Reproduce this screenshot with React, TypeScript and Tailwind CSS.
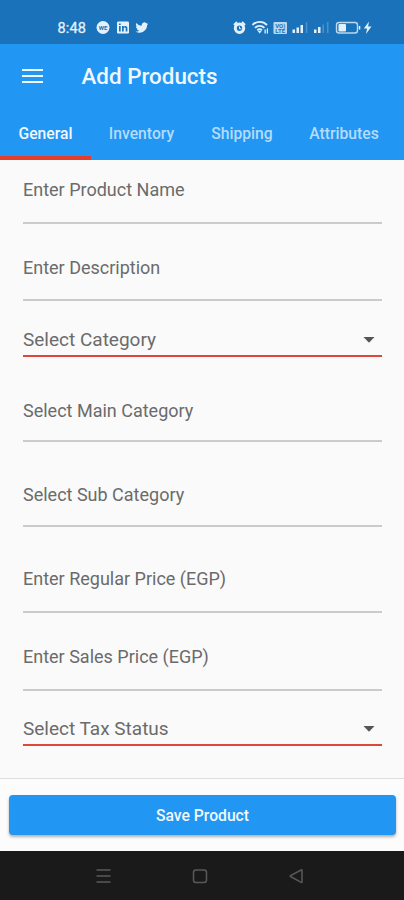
import { useState } from 'react'
import clsx from 'clsx'

const TABS = [
  { label: 'General', width: 'w-[91px]' },
  { label: 'Inventory', width: 'w-[101px]' },
  { label: 'Shipping', width: 'w-[100px]' },
  { label: 'Attributes', width: 'w-[104px]' },
]

const FIELDS = [
  { label: 'Enter Product Name', box: 'h-16 pb-[21px]' },
  { label: 'Enter Description', box: 'h-[77px] pb-5' },
  { label: 'Select Category', box: 'h-14 pb-1', select: true },
  { label: 'Select Main Category', box: 'h-[85px] pb-[18px]' },
  { label: 'Select Sub Category', box: 'h-[85px] pb-[19px]' },
  { label: 'Enter Regular Price (EGP)', box: 'h-[86px] pb-[21px]' },
  { label: 'Enter Sales Price (EGP)', box: 'h-[78px] pb-[21px]' },
  { label: 'Select Tax Status', box: 'h-[55px] pb-1', select: true },
]

function StatusBar() {
  return (
    <div className="h-11 shrink-0 bg-[#1a72ba] text-[#e3f1fd]">
      <svg width="404" height="44" viewBox="0 0 404 44" fill="currentColor" aria-hidden="true">
        <text x="57.5" y="32.500" fontSize="14.500" textLength="28.500" stroke="currentColor" strokeWidth=".3">8:48</text>
        {/* notifications */}
        <circle cx="103" cy="27.500" r="6.500" />
        <text x="103" y="29.800" fontSize="6" fontWeight="700" textAnchor="middle" fill="#1a72ba">WE</text>
        <rect x="117" y="21.500" width="12" height="12" rx="1.200" />
        <path d="M119 26h1.700v5.500H119zM119 23.500h1.700v1.500H119zM122 26h1.600v.8c1-1.400 3.800-1.200 3.800 1.500v3.200h-1.700v-2.800c0-1.600-2-1.500-2 0v2.800H122z" fill="#1a72ba" />
        <g transform="translate(135.5 21) scale(.54)">
          <path d="M23.600 4.900c-.9.4-1.800.6-2.800.8 1-.6 1.800-1.600 2.200-2.700-1 .6-2 1-3.100 1.200A4.900 4.900 0 0 0 11.500 8.600C7.400 8.400 3.800 6.400 1.400 3.500c-1.300 2.200-.7 5.100 1.500 6.600-.8 0-1.600-.2-2.200-.6 0 2.300 1.600 4.400 3.900 4.900-.7.2-1.500.2-2.200.1.600 2 2.400 3.400 4.600 3.400A9.900 9.900 0 0 1 0 19.500a14 14 0 0 0 7.500 2.200c9.100 0 14.300-7.700 14-14.600.8-.6 1.600-1.400 2.100-2.200z" />
        </g>
        {/* alarm */}
        <circle cx="239.500" cy="28.300" r="4.200" fill="none" stroke="currentColor" strokeWidth="3" />
        <path d="M234 25l3-3M245 25l-3-3" stroke="currentColor" strokeWidth="2" />
        <path d="M239.500 26.500v2.300h2" fill="none" stroke="currentColor" strokeWidth="1" />
        {/* wifi */}
        <g fill="none" stroke="currentColor" strokeWidth="1.900">
          <path d="M252.500 25c4-4.200 10.500-4.200 14.500 0M255 27.800c2.600-2.600 6.800-2.600 9.400 0M257.300 30.300c1.400-1.300 3.300-1.300 4.700 0" />
        </g>
        <path d="M257.700 31h4l-2 2.500zM264.500 29.500h1.300V33.500h-1.300zM266.800 28.500h1.200v5h-1.200z" />
        {/* volte */}
        <rect x="273.500" y="22" width="13.500" height="12" rx="1" opacity=".8" />
        <text x="280.200" y="27.800" fontSize="6" fontWeight="700" textAnchor="middle" fill="#1a72ba">VO)</text>
        <text x="280.200" y="33.300" fontSize="6" fontWeight="700" textAnchor="middle" fill="#1a72ba">LTE</text>
        {/* signal */}
        <path d="M292.500 29.500h2.500v3.500h-2.500zM296.500 27.500h2.500v5.500h-2.500zM300.500 25h2.500v8h-2.500zM314 29.500h2.500v3.500h-2.500zM318 27h2.500v6h-2.500z" />
        <path d="M305.800 22h1.500v11h-1.500zM322.500 24.500h1.500v8.500h-1.500zM327 22h1.500v11h-1.500z" opacity=".25" />
        {/* battery */}
        <rect x="336.500" y="22.500" width="21" height="10.500" rx="2.500" fill="none" stroke="currentColor" strokeWidth="1.400" opacity=".8" />
        <rect x="338.500" y="24" width="7.500" height="7.500" rx="1" />
        <path d="M358.800 26h1.500v3.500h-1.500zM369 21.500l-5.200 7h3.300L366 34l5.500-7.400h-3.400z" />
      </svg>
    </div>
  )
}

export default function App() {
  const [active, setActive] = useState('General')

  return (
    <div className="flex h-[900px] w-[404px] flex-col overflow-hidden bg-[#fafafa] font-[Roboto,sans-serif]">
      <StatusBar />

      <header className="flex h-[116px] shrink-0 flex-col bg-[#2196f3] text-[#f0f8ff]">
        <div className="flex h-16 items-center pl-[21.5px]">
          <button aria-label="Menu" className="mb-px flex w-[21px] flex-col gap-[4px]">
            <span className="h-[2px] bg-[#f0f8ff]" />
            <span className="h-[2px] bg-[#f0f8ff]" />
            <span className="h-[2px] bg-[#f0f8ff]" />
          </button>
          <h1 className="ml-[39px] text-[22.4px] leading-7 font-medium whitespace-nowrap">Add Products</h1>
        </div>
        <nav className="flex flex-1">
          {TABS.map((tab) => (
            <button
              key={tab.label}
              onClick={() => setActive(tab.label)}
              className={clsx(
                'shrink-0 border-b-4 pt-1 text-center text-[15.7px] font-medium whitespace-nowrap',
                tab.width,
                active === tab.label ? 'border-[#e43d2e] text-[#f0f8ff]' : 'border-transparent text-[#b4dcfb]',
              )}
            >
              {tab.label}
            </button>
          ))}
        </nav>
      </header>

      <main className="flex flex-1 flex-col pr-[22px] pl-[23px]">
        {FIELDS.map((field) => (
          <div
            key={field.label}
            className={clsx(
              'flex shrink-0 items-end justify-between border-b-2 text-[#6b6b6b]',
              field.box,
              field.select ? 'border-[#df4538] text-[19px]' : 'border-[#cbcbcb] text-[18px]',
            )}
          >
            <span className="leading-[22px] whitespace-nowrap">{field.label}</span>
            {field.select && (
              <svg width="12" height="6" viewBox="0 0 12 6" className="mr-[7px] mb-2" aria-hidden="true">
                <path d="M0.500 0h11L6 5.800z" fill="#555" />
              </svg>
            )}
          </div>
        ))}
      </main>

      <footer className="h-[73px] shrink-0 border-t border-[#dedede] bg-[#fcfcfc] pt-4 pr-2 pl-[9px]">
        <button className="h-10 w-full rounded-[4px] bg-[#2196f3] pt-0.5 text-[15.7px] font-medium text-[#f0f8ff] shadow-[0_2px_3px_rgba(0,0,0,0.3)]">
          Save Product
        </button>
      </footer>

      <div className="h-[49px] shrink-0 bg-[#1a1a1a]">
        <svg width="404" height="49" viewBox="0 0 404 49" fill="none" stroke="#595959" strokeWidth="1.500" aria-hidden="true">
          <path d="M96.500 19h14M96.500 25h14M96.500 31h14" />
          <rect x="193.500" y="19" width="13" height="12.500" rx="2.500" />
          <path d="M302 19.500v11.500q0 .8-.8.4L290.500 25.500q-.6-.4 0-.8L301.200 19q.8-.4.800.500z" />
        </svg>
      </div>
    </div>
  )
}
